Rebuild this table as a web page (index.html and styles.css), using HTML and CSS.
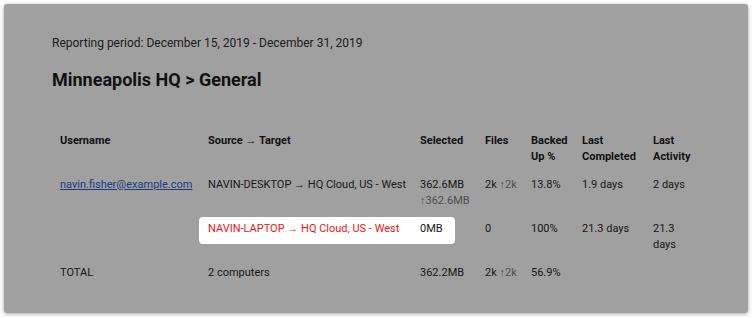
FILE: index.html
```html
<!DOCTYPE html>
<html>
<head>
<meta charset="utf-8">
<link rel="stylesheet" href="styles.css">
</head>
<body>
<div class="card">
  <div class="spotlight"></div>
  <p class="period">Reporting period: December 15, 2019 - December 31, 2019</p>
  <h1 class="title">Minneapolis HQ &gt; General</h1>
  <table class="report">
    <colgroup>
      <col class="c-user"><col class="c-src"><col class="c-sel"><col class="c-files"><col class="c-backed"><col class="c-comp"><col class="c-act">
    </colgroup>
    <thead>
      <tr>
        <th>Username</th>
        <th>Source → Target</th>
        <th>Selected</th>
        <th>Files</th>
        <th>Backed Up %</th>
        <th>Last Completed</th>
        <th>Last Activity</th>
      </tr>
    </thead>
    <tbody>
      <tr>
        <td><a class="user" href="#">navin.fisher@example.com</a></td>
        <td class="nowrap">NAVIN-DESKTOP → HQ Cloud, US - West</td>
        <td>362.6MB<br><span class="muted">↑362.6MB</span></td>
        <td class="nowrap">2k <span class="muted">↑2k</span></td>
        <td>13.8%</td>
        <td>1.9 days</td>
        <td>2 days</td>
      </tr>
      <tr class="hl">
        <td></td>
        <td class="alert nowrap">NAVIN-LAPTOP → HQ Cloud, US - West</td>
        <td>0MB</td>
        <td>0</td>
        <td>100%</td>
        <td>21.3 days</td>
        <td>21.3 days</td>
      </tr>
      <tr>
        <td>TOTAL</td>
        <td>2 computers</td>
        <td>362.2MB</td>
        <td class="nowrap">2k <span class="muted">↑2k</span></td>
        <td>56.9%</td>
        <td></td>
        <td></td>
      </tr>
    </tbody>
  </table>
</div>
</body>
</html>
```

FILE: styles.css
```css
html, body {
  margin: 0;
  padding: 0;
  background: #ffffff;
}
body {
  padding: 4px;
  font-family: Roboto, "Liberation Sans", Arial, sans-serif;
  color: #161616;
}
.card {
  position: relative;
  box-sizing: border-box;
  width: 744px;
  height: 309px;
  background: #a0a0a0;
  border-radius: 3px;
  box-shadow: 0 1px 4px rgba(0, 0, 0, 0.35);
  padding: 31px 48px 0 48px;
}
.spotlight {
  position: absolute;
  left: 195px;
  top: 213px;
  width: 256px;
  height: 27px;
  background: #ffffff;
  border-radius: 4px;
  z-index: 0;
}
.period {
  margin: 0;
  font-size: 12px;
  line-height: 16px;
  color: #1a1a1a;
}
.title {
  margin: 17px 0 0 0;
  font-size: 18px;
  line-height: 24px;
  font-weight: 700;
  color: #111111;
}
.report {
  position: relative;
  z-index: 1;
  margin-top: 35px;
  width: 648px;
  table-layout: fixed;
  border-collapse: collapse;
  font-size: 11px;
  line-height: 16px;
}
.c-user { width: 148px; }
.c-src { width: 212px; }
.c-sel { width: 65px; }
.c-files { width: 46px; }
.c-backed { width: 51px; }
.c-comp { width: 71px; }
.c-act { width: 55px; }
.report th,
.report td {
  padding: 6px 8px;
  text-align: left;
  vertical-align: top;
}
.report th {
  font-weight: 700;
  color: #111111;
}
.report td {
  color: #161616;
}
.nowrap {
  white-space: nowrap;
}
.muted {
  color: #4e4e4e;
}
.user {
  color: #1d3a86;
  text-decoration: underline;
}
.report td.alert {
  color: #f01414;
}
```
